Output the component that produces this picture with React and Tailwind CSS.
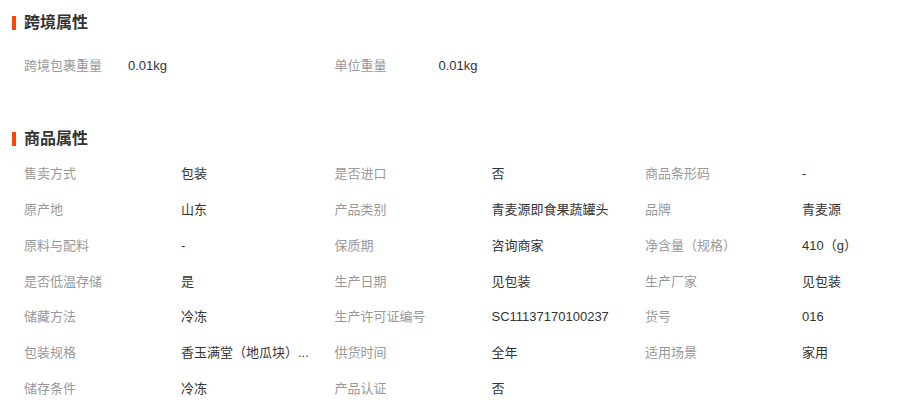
const CROSS_BORDER = [
  ['跨境包裹重量', '0.01kg'],
  ['单位重量', '0.01kg'],
]

const ATTRS = [
  ['售卖方式', '包装'],
  ['是否进口', '否'],
  ['商品条形码', '-'],
  ['原产地', '山东'],
  ['产品类别', '青麦源即食果蔬罐头'],
  ['品牌', '青麦源'],
  ['原料与配料', '-'],
  ['保质期', '咨询商家'],
  ['净含量（规格）', '410（g）'],
  ['是否低温存储', '是'],
  ['生产日期', '见包装'],
  ['生产厂家', '见包装'],
  ['储藏方法', '冷冻'],
  ['生产许可证编号', 'SC11137170100237'],
  ['货号', '016'],
  ['包装规格', '香玉满堂（地瓜块）...'],
  ['供货时间', '全年'],
  ['适用场景', '家用'],
  ['储存条件', '冷冻'],
  ['产品认证', '否'],
]

function SectionTitle({ children, className = '' }) {
  return (
    <div className={`flex items-center gap-[8px] ${className}`}>
      <span className="w-[4px] h-[14px] bg-[#ff4400]" />
      <h2 className="text-[16px] leading-[20px] font-bold text-[#333]">{children}</h2>
    </div>
  )
}

export default function App() {
  return (
    <div
      className="w-[914px] h-[411px] bg-white px-[12px] overflow-hidden"
      style={{ fontFamily: '"Liberation Sans", "Noto Sans CJK SC", sans-serif' }}
    >
      <SectionTitle className="h-[46px]">跨境属性</SectionTitle>

      {/* cross-border */}
      <div className="flex pl-[12px] mt-[2px]">
        {CROSS_BORDER.map(([k, v]) => (
          <div key={k} className="flex items-center w-[310.5px] h-[36px] text-[13px]">
            <span className="w-[104px] shrink-0 text-[#999]">{k}</span>
            <span className="text-[#333]">{v}</span>
          </div>
        ))}
      </div>

      <SectionTitle className="h-[34px] mt-[38px]">商品属性</SectionTitle>

      {/* product attributes */}
      <div className="grid grid-cols-[310.5px_310.5px_310.5px] pl-[12px]">
        {ATTRS.map(([k, v]) => (
          <div key={k} className="flex items-center h-[35.8px] text-[13px]">
            <span className="w-[157px] shrink-0 text-[#999]">{k}</span>
            <span className="whitespace-nowrap text-[#333]">{v}</span>
          </div>
        ))}
      </div>
    </div>
  )
}
